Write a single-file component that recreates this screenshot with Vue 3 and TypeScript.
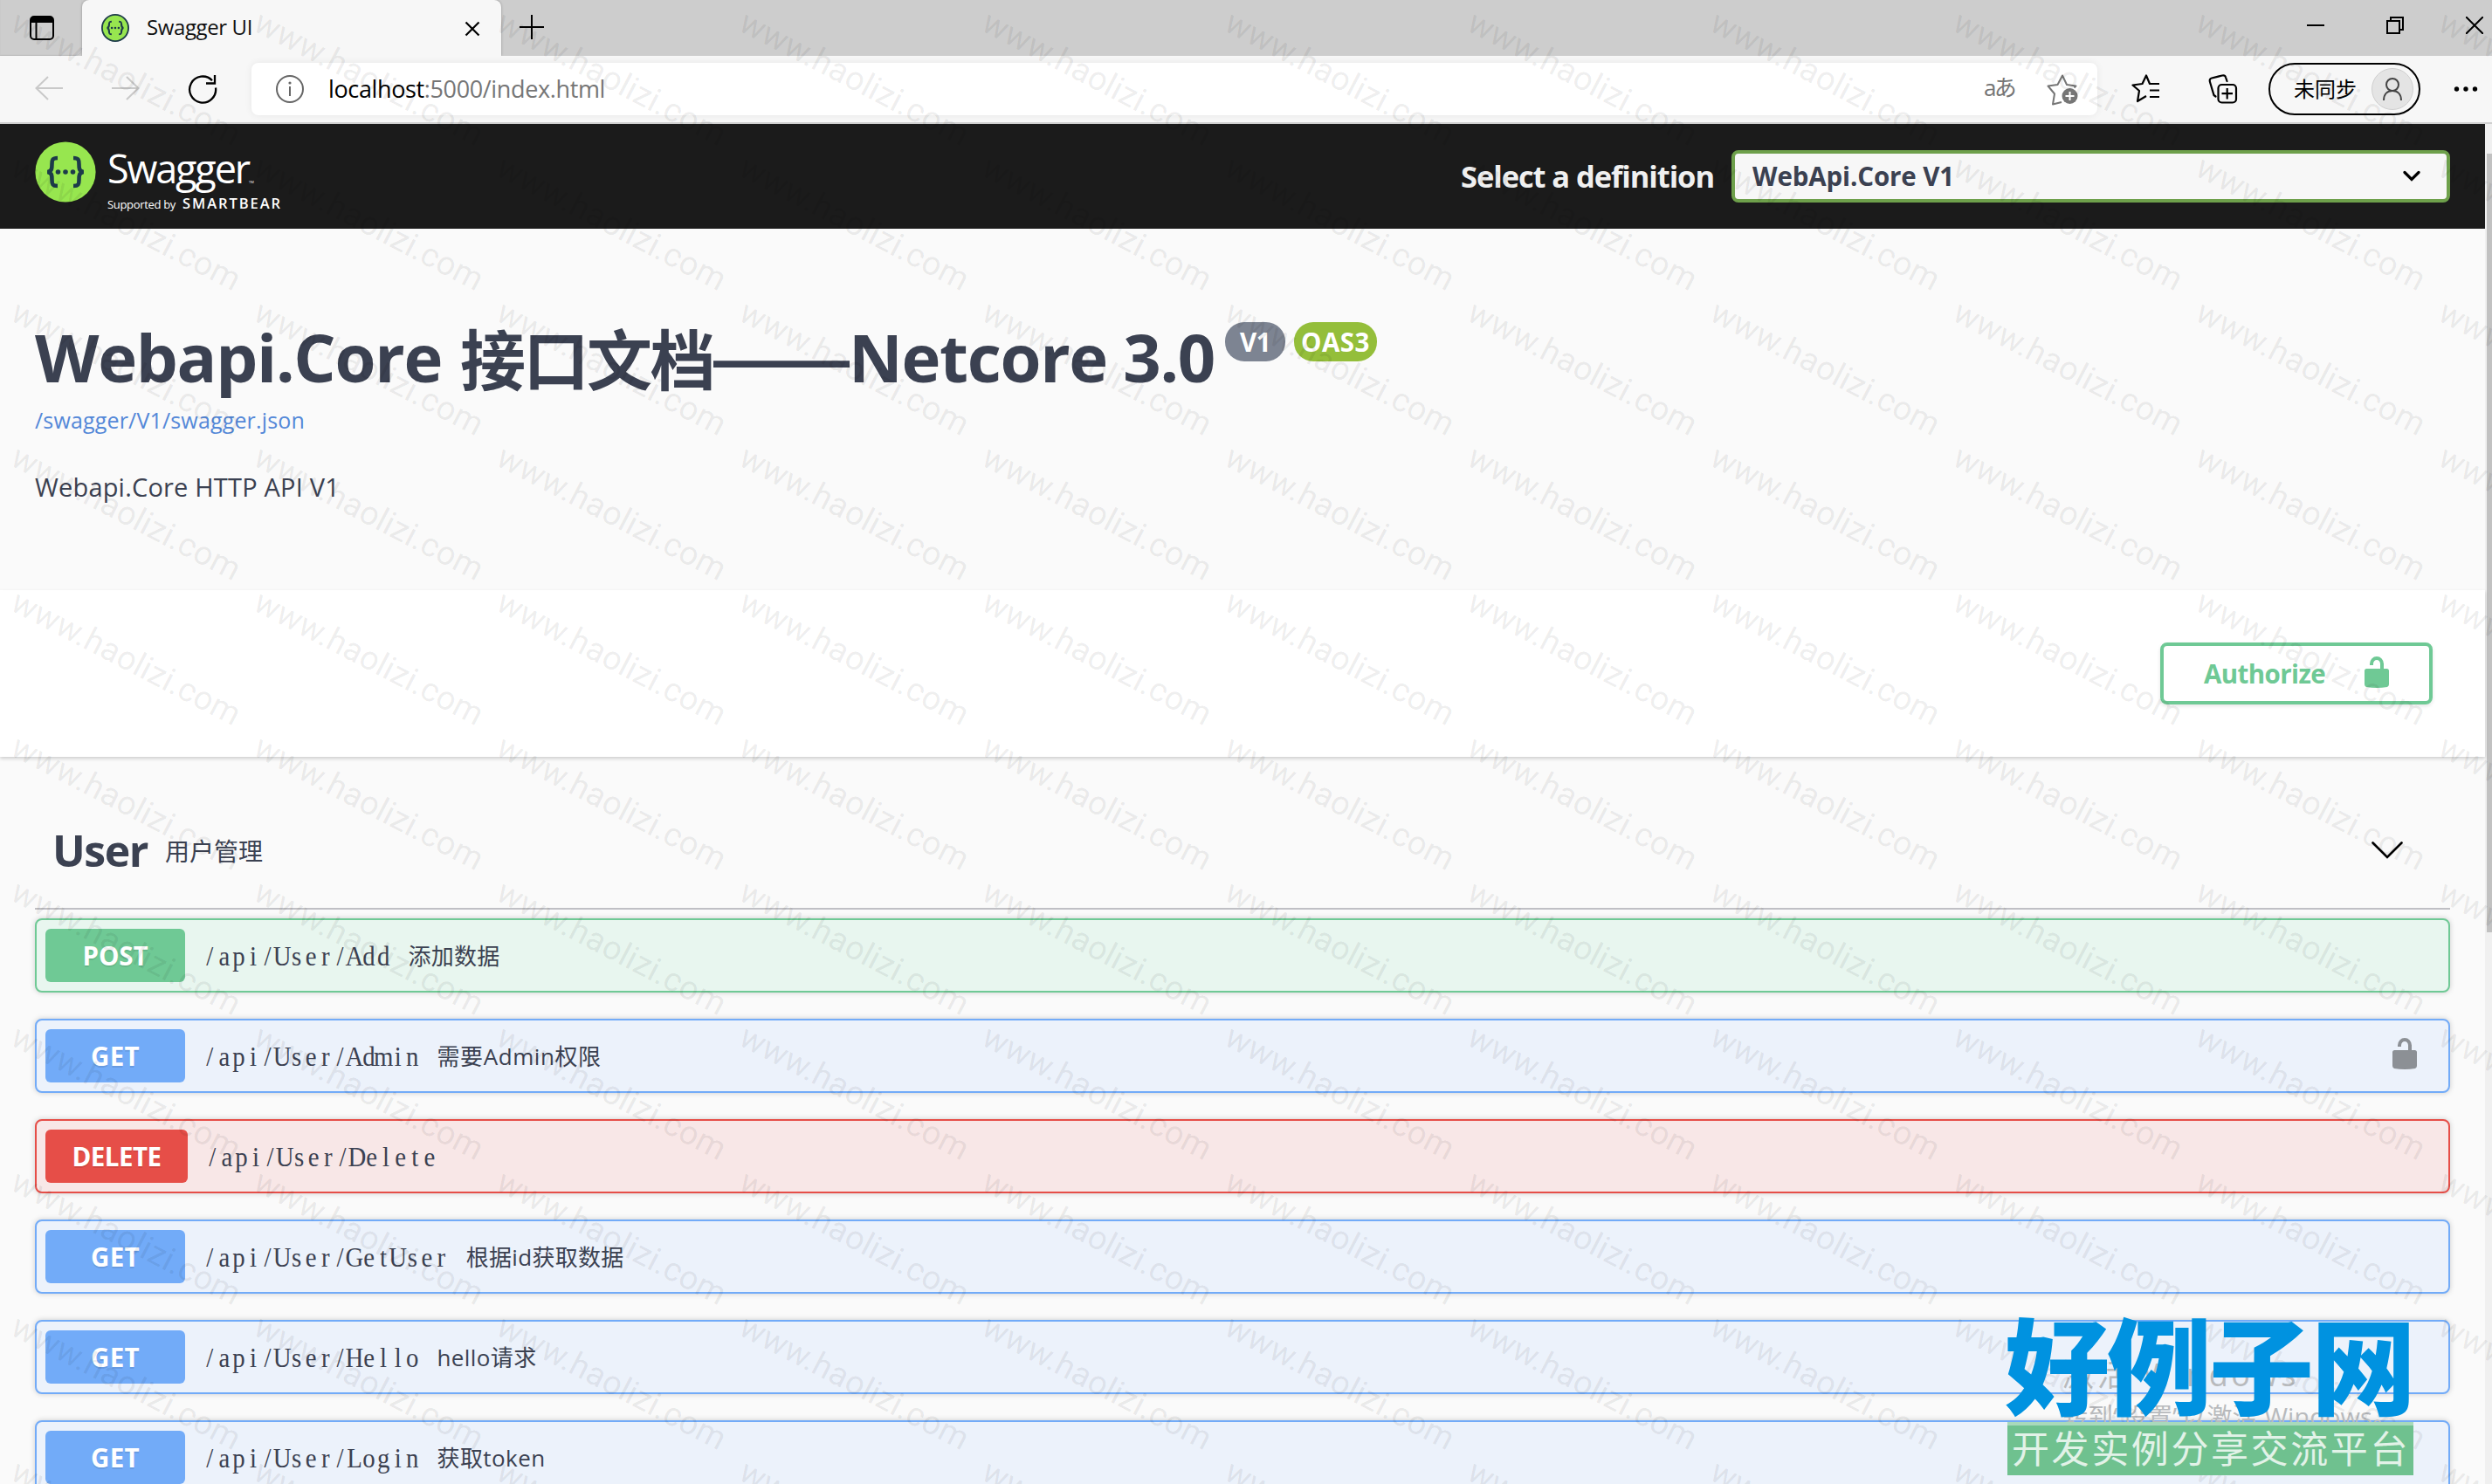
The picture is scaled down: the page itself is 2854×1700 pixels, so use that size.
<script setup lang="ts">
interface Operation {
  method: 'POST' | 'GET' | 'DELETE'
  methodWidth: number
  path: string
  summary: string
  summaryWidth: number
  locked?: boolean
}

const operations: Operation[] = [
  { method: 'POST', methodWidth: 75, path: '/api/User/Add', summary: '添加数据', summaryWidth: 105 },
  { method: 'GET', methodWidth: 56, path: '/api/User/Admin', summary: '需要Admin权限', summaryWidth: 188, locked: true },
  { method: 'DELETE', methodWidth: 102, path: '/api/User/Delete', summary: '', summaryWidth: 0 },
  { method: 'GET', methodWidth: 56, path: '/api/User/GetUser', summary: '根据id获取数据', summaryWidth: 181 },
  { method: 'GET', methodWidth: 56, path: '/api/User/Hello', summary: 'hello请求', summaryWidth: 114 },
  { method: 'GET', methodWidth: 56, path: '/api/User/Login', summary: '获取token', summaryWidth: 124 },
]

// Paths are set on a fixed character grid with condensed serif glyphs
const CELL = 16.57
const CONDENSE = 0.93
const cells = (path: string) =>
  Array.from(path, (_, i) => (((i + 0.5) * CELL) / CONDENSE).toFixed(2)).join(' ')

// Tiled watermark origins
const marks = Array.from({ length: 11 * 11 }, (_, i) => ({
  x: 10 + 278 * (i % 11),
  y: 34 + 166 * Math.floor(i / 11),
}))

// Tracks a label so it occupies the given width in whatever font is installed
const vFit = {
  mounted(el: HTMLElement, binding: { value: number }) {
    if (!binding.value) return
    const count = Array.from(el.textContent ?? '').length
    const gap = (binding.value - el.getBoundingClientRect().width) / count
    el.style.letterSpacing = `${gap.toFixed(3)}px`
  },
}
</script>

<template>
  <div class="window">
    <header class="tabs">
      <div class="tab-actions">
        <svg width="28" height="28" viewBox="0 0 28 28">
          <rect x="1" y="1" width="26" height="26" rx="4" fill="none" stroke="#000" stroke-width="2" />
          <path d="M1 8V5a4 4 0 0 1 4-4h18a4 4 0 0 1 4 4v3z" fill="#000" />
          <path d="M7.500 8v19" stroke="#000" stroke-width="2" />
        </svg>
      </div>
      <div class="tab">
        <svg class="favicon" width="32" height="32" viewBox="0 0 70 70">
          <circle cx="35" cy="35" r="33" fill="#97e64f" stroke="#1d3b4a" stroke-width="4" />
          <g fill="none" stroke="#1d3b4a" stroke-width="4.600">
            <path d="M26 19c-6 0-6.500 2-6.500 7 0 5 0 8-5 9 5 1 5 4 5 9s.5 7 6.500 7" />
            <path d="M44 19c6 0 6.500 2 6.500 7 0 5 0 8 5 9-5 1-5 4-5 9s-.5 7-6.500 7" />
          </g>
          <g fill="#1d3b4a"><circle cx="26.500" cy="35" r="2.800" /><circle cx="35" cy="35" r="2.800" /><circle cx="43.500" cy="35" r="2.800" /></g>
        </svg>
        <span v-fit="121" class="tab-title">Swagger UI</span>
        <svg class="tab-close" width="18" height="18" viewBox="0 0 18 18"><path d="M1.500 1.500l15 15M16.500 1.500l-15 15" stroke="#000" stroke-width="2.200" /></svg>
      </div>
      <svg class="new-tab" width="28" height="28" viewBox="0 0 28 28"><path d="M14 0v28M0 14h28" stroke="#000" stroke-width="2" /></svg>
      <div class="window-controls">
        <svg width="20" height="20" viewBox="0 0 20 20"><path d="M0 10h20" stroke="#000" stroke-width="2" /></svg>
        <svg width="20" height="20" viewBox="0 0 20 20"><path d="M1 5h14v14H1zM5 5V1h14v14h-4" fill="none" stroke="#000" stroke-width="2" /></svg>
        <svg width="20" height="20" viewBox="0 0 20 20"><path d="M0 0l20 20M20 0L0 20" stroke="#000" stroke-width="2" /></svg>
      </div>
    </header>

    <nav class="toolbar">
      <svg class="back" width="32" height="28" viewBox="0 0 32 28"><path d="M32 14H1M15 1L1.500 14 15 27" fill="none" stroke="#c9c9c9" stroke-width="2" /></svg>
      <svg class="forward" width="32" height="28" viewBox="0 0 32 28"><path d="M0 14h31M17 1l13.500 13L17 27" fill="none" stroke="#c9c9c9" stroke-width="2" /></svg>
      <svg class="reload" width="34" height="34" viewBox="0 0 34 34"><path d="M32 15.500A15 15 0 1 1 28 7.200M31 1v9.500h-10" fill="none" stroke="#000" stroke-width="2.300" /></svg>
      <div class="address">
        <svg class="info" width="32" height="32" viewBox="0 0 32 32">
          <circle cx="16" cy="16" r="15" fill="none" stroke="#666" stroke-width="2" />
          <path d="M16 13v11" stroke="#666" stroke-width="2" /><circle cx="16" cy="9" r="1.600" fill="#666" />
        </svg>
        <span v-fit="317" class="url">localhost<span class="url-rest">:5000/index.html</span></span>
        <span v-fit="35" class="translate">aあ</span>
        <svg class="favorite" width="38" height="36" viewBox="0 0 38 36">
          <path d="M17 32l-10 2.500 2-12L1.500 13.500l11-1.500L18 1.500l5 10.500 10.500 1.500-2 2" fill="none" stroke="#767676" stroke-width="2" stroke-linejoin="round" />
          <circle cx="26.500" cy="25" r="9" fill="#767676" /><path d="M26.500 20v10M21.500 25h10" stroke="#fff" stroke-width="2" />
        </svg>
      </div>
      <svg class="favorites" width="34" height="34" viewBox="0 0 34 34">
        <path d="M17 25l-10 6 2-12L1.500 12.500l11-1.500L17 1.500 21 11h11M21 18.500h11M21 26h11" fill="none" stroke="#000" stroke-width="2.200" stroke-linejoin="round" />
      </svg>
      <svg class="collections" width="34" height="34" viewBox="0 0 34 34">
        <path d="M8.500 25.500L6.500 24 2 9c-.7-2.500 0-4 2-4.500L16 1.500c2-.5 3.500.2 4 2L21.500 8" fill="none" stroke="#000" stroke-width="2.200" stroke-linecap="round" />
        <rect x="11.500" y="12" width="20.500" height="20.500" rx="4" fill="none" stroke="#000" stroke-width="2.200" />
        <path d="M21.700 16v12.500M15.500 22.200H28" stroke="#000" stroke-width="2.200" />
      </svg>
      <div class="profile">
        <span v-fit="72" class="profile-label">未同步</span>
        <span class="avatar">
          <svg width="24" height="26" viewBox="0 0 24 26"><circle cx="12" cy="8" r="7" fill="none" stroke="#444" stroke-width="2" /><path d="M2 26c0-7 4-11 10-11s10 4 10 11" fill="none" stroke="#444" stroke-width="2" /></svg>
        </span>
      </div>
      <svg class="more" width="28" height="8" viewBox="0 0 28 8"><circle cx="3.500" cy="4" r="2.700" /><circle cx="14" cy="4" r="2.700" /><circle cx="24.500" cy="4" r="2.700" /></svg>
    </nav>

    <div class="viewport">
      <main class="page">
        <div class="topbar">
          <div class="logo">
            <svg class="logo-mark" width="70" height="70" viewBox="0 0 70 70">
              <circle cx="35" cy="35" r="34.600" fill="#97e64f" />
              <g fill="none" stroke="#1d3b4a" stroke-width="4.600">
                <path d="M26 19c-6 0-6.500 2-6.500 7 0 5 0 8-5 9 5 1 5 4 5 9s.5 7 6.500 7" />
                <path d="M44 19c6 0 6.500 2 6.500 7 0 5 0 8 5 9-5 1-5 4-5 9s-.5 7-6.500 7" />
              </g>
              <g fill="#1d3b4a"><circle cx="26.500" cy="35" r="2.800" /><circle cx="35" cy="35" r="2.800" /><circle cx="43.500" cy="35" r="2.800" /></g>
            </svg>
            <div class="logo-text">
              <div class="logo-name"><span v-fit="162">Swagger</span><small>TM</small></div>
              <div class="logo-by"><span v-fit="78">Supported by</span><b v-fit="114">SMARTBEAR</b></div>
            </div>
          </div>
          <span v-fit="290" class="definition-label">Select a definition</span>
          <div class="definition">
            <span v-fit="231">WebApi.Core V1</span>
            <svg width="20" height="14" viewBox="0 0 20 14"><path d="M2 2.500l8 8 8-8" fill="none" stroke="#000" stroke-width="3.200" stroke-linecap="round" /></svg>
          </div>
        </div>

        <section class="info-block">
          <h1 class="title">
            <span v-fit="466" class="seg">Webapi.Core</span>
            <span v-fit="290" class="seg cjk">接口文档</span>
            <span class="seg dash">——</span>
            <span v-fit="419" class="seg">Netcore 3.0</span>
            <span class="badge version"><span v-fit="35">V1</span></span>
            <span class="badge oas"><span v-fit="79">OAS3</span></span>
          </h1>
          <a class="spec"><span v-fit="309">/swagger/V1/swagger.json</span></a>
          <p class="about"><span v-fit="349">Webapi.Core HTTP API V1</span></p>
        </section>

        <section class="scheme">
          <button class="authorize">
            <span v-fit="139">Authorize</span>
            <svg width="28" height="36" viewBox="0 0 28 36"><path d="M6 10V8.500a8 8.500 0 0 1 16 0V14h3.500Q28 14 28 16.500V32q0 2-2 3-12 2-24 0-2-1-2-3V16.500Q0 14 2.500 14H18V8.500a4 4.500 0 0 0-8 0V10z" fill="#6fc995" /></svg>
          </button>
        </section>

        <section class="tag">
          <h2 class="tag-header">
            <span v-fit="109">User</span>
            <small v-fit="112">用户管理</small>
            <svg width="36" height="20" viewBox="0 0 36 20"><path d="M1.500 1.500L18 18 34.500 1.500" fill="none" stroke="#000" stroke-width="2.600" stroke-linecap="round" /></svg>
          </h2>
          <div v-for="op in operations" :key="op.path" class="operation" :class="op.method.toLowerCase()">
            <span class="method"><span v-fit="op.methodWidth">{{ op.method }}</span></span>
            <svg class="path" :width="op.path.length * CELL" height="44">
              <text :transform="`scale(${CONDENSE} 1)`" :x="cells(op.path)" y="33">{{ op.path }}</text>
            </svg>
            <span v-if="op.summary" v-fit="op.summaryWidth" class="summary">{{ op.summary }}</span>
            <svg v-if="op.locked" class="lock" width="28" height="36" viewBox="0 0 28 36"><path d="M6 10V8.500a8 8.500 0 0 1 16 0V14h3.500Q28 14 28 16.500V32q0 2-2 3-12 2-24 0-2-1-2-3V16.500Q0 14 2.500 14H18V8.500a4 4.500 0 0 0-8 0V10z" fill="#8c9095" /></svg>
          </div>
        </section>
      </main>
      <div class="scrollbar"><div class="thumb"></div></div>
    </div>

    <div class="activation">
      <div class="activation-title"><span v-fit="271">激活 Windows</span></div>
      <div class="activation-hint"><span v-fit="384">转到“设置”以激活 Windows。</span></div>
    </div>

    <svg class="watermark" width="2854" height="1700">
      <text v-for="(m, i) in marks" :key="i" :transform="`translate(${m.x} ${m.y}) rotate(27.5)`" textLength="290">www.haolizi.com</text>
    </svg>

    <div class="site">
      <div class="site-name"><span v-fit="468">好例子网</span></div>
      <div class="site-slogan"><span v-fit="456">开发实例分享交流平台</span></div>
    </div>
  </div>
</template>

<style>
body {
  margin: 0;
  overflow: hidden;
}
</style>

<style scoped>
.window {
  position: relative;
  width: 2854px;
  height: 1700px;
  overflow: hidden;
  display: flex;
  flex-direction: column;
  background: #f7f7f7;
  color: #3b4151;
  font-family: "Open Sans", "Noto Sans CJK SC", sans-serif;
  white-space: nowrap;
}
.window * {
  box-sizing: border-box;
}
svg {
  display: block;
  flex: none;
}
span,
small,
b {
  display: inline-block;
}
.tabs {
  flex: none;
  height: 64px;
  background: #cdcdcd;
  display: flex;
}
.tab-actions {
  width: 94px;
  padding: 18px 0 0 34px;
  border-bottom-right-radius: 8px;
  box-shadow: inset 0 -1px 1px #bbb;
}
.tab {
  width: 480px;
  background: #f7f7f7;
  border-radius: 8px 8px 0 0;
  box-shadow: 0 0 3px rgba(0, 0, 0, 0.3);
  display: flex;
  align-items: center;
  padding: 0 24px 0 22px;
}
.tab-title {
  margin: -3px 0 0 20px;
  font-size: 24px;
  line-height: 32px;
  color: #111;
}
.tab-close {
  margin-left: auto;
  margin-top: 2px;
}
.new-tab {
  margin: 17px 0 0 21px;
}
.window-controls {
  margin-left: auto;
  display: flex;
  gap: 71px;
  padding: 19px 10px 0 0;
}
.toolbar {
  position: relative;
  flex: none;
  height: 78px;
  background: #f7f7f7;
  border-bottom: 2px solid #cfcfcf;
  display: flex;
  align-items: center;
}
.back {
  margin: -2px 0 0 40px;
}
.forward {
  margin: -2px 0 0 56px;
}
.reload {
  margin-left: 55px;
}
.address {
  width: 2114px;
  height: 60px;
  margin-left: 39px;
  background: #fff;
  border-radius: 8px;
  box-shadow: 0 0 8px rgba(0, 0, 0, 0.07);
  display: flex;
  align-items: center;
  padding-left: 28px;
}
.url {
  margin: -1px 0 0 28px;
  font-size: 27px;
  line-height: 40px;
  color: #000;
}
.url-rest {
  display: inline;
  color: #767676;
}
.translate {
  margin: -4px 0 0 auto;
  font-size: 26px;
  line-height: 40px;
  color: #767676;
}
.favorite {
  margin: 2px 20px 0 37px;
}
.favorites {
  margin-left: 39px;
}
.collections {
  margin-left: 54px;
}
.profile {
  width: 174px;
  height: 60px;
  margin-left: 35px;
  border: 2px solid #000;
  border-radius: 30px;
  display: flex;
  align-items: center;
  padding-left: 27px;
}
.profile-label {
  margin-top: -3px;
  font: 24px/40px "Noto Sans CJK SC", sans-serif;
  color: #000;
}
.avatar {
  width: 48px;
  height: 48px;
  margin-left: 17px;
  border-radius: 50%;
  border: 1px solid #cfcfcf;
  background: #e4e4e4;
  display: flex;
  align-items: center;
  justify-content: center;
}
.more {
  margin-left: 38px;
}
.viewport {
  flex: 1;
  min-height: 0;
  display: flex;
  overflow: hidden;
}
.page {
  width: 2846px;
  background: #fafafa;
}
.scrollbar {
  width: 8px;
  background: #f0f0f0;
  padding: 34px 0 0 2px;
}
.thumb {
  height: 892px;
  background: #c1c1c1;
}
.topbar {
  height: 120px;
  background: #1b1b1b;
  display: flex;
  align-items: center;
  padding: 0 40px;
}
.logo {
  align-self: flex-start;
  display: flex;
  padding-top: 20px;
  color: #fff;
}
.logo-text {
  margin-left: 13px;
}
.logo-name {
  height: 56px;
  font-size: 45px;
  line-height: 62px;
}
.logo-name small {
  font-size: 4px;
}
.logo-by {
  display: flex;
  align-items: baseline;
  gap: 8px;
  font-size: 13px;
  line-height: 30px;
}
.logo-by b {
  font-size: 16.500px;
  font-weight: 600;
}
.definition-label {
  margin-left: auto;
  color: #f0f0f0;
  font-size: 34.500px;
  font-weight: 700;
  line-height: 60px;
}
.definition {
  width: 823px;
  height: 60px;
  margin-left: 20px;
  border: 4px solid #6ea04b;
  border-radius: 8px;
  background: #f7f7f7;
  display: flex;
  align-items: center;
  justify-content: space-between;
  padding: 0 30px 0 20px;
  font-size: 29.500px;
  font-weight: 700;
  line-height: 50px;
}
.info-block {
  height: 414px;
  padding: 100px 40px 0;
}
.title {
  height: 94px;
  margin: 0;
  display: flex;
  font-size: 76px;
  font-weight: 700;
  line-height: 94px;
}
.title .cjk {
  margin-left: 21px;
  font-family: "Noto Sans CJK SC", sans-serif;
  font-size: 75px;
}
.title .dash {
  flex: none;
  width: 155px;
  margin-top: 2px;
  font-family: "Liberation Sans", sans-serif;
  font-size: 78px;
}
.badge {
  height: 45px;
  margin-top: 7px;
  border-radius: 22px;
  color: #fff;
  font-size: 29.500px;
  line-height: 46px;
  text-align: center;
}
.version {
  width: 69px;
  margin-left: 12px;
  background: #7d8492;
}
.oas {
  width: 95px;
  margin-left: 10px;
  background: #94be3a;
}
.spec {
  display: block;
  margin-top: 8px;
  height: 36px;
  font-size: 25px;
  line-height: 35px;
  color: #5488d8;
}
.about {
  margin: 38px 0 0;
  font-size: 29px;
  line-height: 40px;
}
.scheme {
  position: relative;
  height: 191px;
  background: #fff;
  box-shadow: 0 2px 4px rgba(0, 0, 0, 0.18);
  display: flex;
  justify-content: flex-end;
  padding: 60px 60px 0 0;
}
.authorize {
  width: 312px;
  height: 71px;
  border: 4px solid #6fc995;
  border-radius: 8px;
  background: transparent;
  box-shadow: 0 2px 4px rgba(0, 0, 0, 0.1);
  display: flex;
  align-items: center;
  padding: 0 0 0 46px;
  font: 700 29.500px/40px "Open Sans", sans-serif;
  color: #6fc995;
}
.authorize svg {
  margin: -3px 0 0 45px;
}
.tag {
  padding: 65px 40px 0;
}
.tag-header {
  height: 110px;
  margin: 0 0 10px;
  padding: 0 54px 24px 20px;
  border-bottom: 2px solid #bfbfc4;
  display: flex;
  align-items: center;
  font-size: 50px;
  font-weight: 700;
  line-height: 80px;
}
.tag-header small {
  margin: 0 0 0 20px;
  font: 28px/40px "Noto Sans CJK SC", sans-serif;
}
.tag-header svg {
  margin-left: auto;
}
.operation {
  height: 85px;
  margin-bottom: 30px;
  border: 2px solid;
  border-radius: 8px;
  box-shadow: 0 0 6px rgba(0, 0, 0, 0.19);
  display: flex;
  align-items: center;
  padding: 0 36px 0 10px;
}
.post {
  border-color: #6fc995;
  background: #e8f6ef;
}
.get {
  border-color: #72abf8;
  background: #ecf2fb;
}
.delete {
  border-color: #e64e48;
  background: #f8e7e7;
}
.method {
  width: 160px;
  height: 61px;
  border-radius: 6px;
  color: #fff;
  font-size: 29.500px;
  font-weight: 700;
  line-height: 62px;
  text-align: center;
  text-shadow: 0 2px 0 rgba(0, 0, 0, 0.1);
}
.post .method {
  background: #6fc995;
}
.get .method {
  background: #72abf8;
}
.delete .method {
  width: 163px;
  background: #e64e48;
}
.path {
  margin-left: 20px;
  overflow: visible;
}
.path text {
  font: 31px "Liberation Serif", serif;
  fill: #3b4151;
  text-anchor: middle;
}
.summary {
  margin: 0 0 0 20px;
  font-size: 26px;
  line-height: 40px;
}
.lock {
  margin: -5px 0 0 auto;
}
.activation {
  position: absolute;
  left: 2362px;
  top: 1546px;
  color: #b8babd;
}
.activation-title {
  font-size: 36px;
  line-height: 58px;
}
.activation-hint {
  font-size: 29px;
  line-height: 38px;
}
.watermark {
  position: absolute;
  left: 0;
  top: 0;
  font: 400 38px Roboto, sans-serif;
  fill: rgba(0, 0, 0, 0.08);
  pointer-events: none;
}
.site {
  position: absolute;
  left: 2299px;
  top: 1500px;
}
.site-name {
  height: 129px;
  margin-left: -3px;
  font: 900 120px/121px "Noto Sans CJK SC", sans-serif;
  color: #0092e0;
}
.site-slogan {
  width: 465px;
  height: 61px;
  padding-left: 5px;
  border-top: 4px solid #a9d9bb;
  background: #6fc18f;
  color: #e2f2e8;
  font: 43px/49px "Noto Sans CJK SC", sans-serif;
}
</style>
